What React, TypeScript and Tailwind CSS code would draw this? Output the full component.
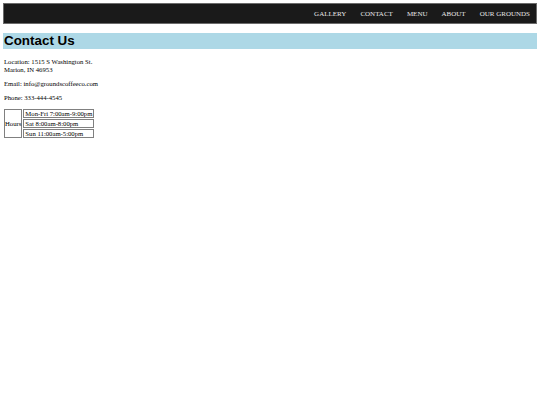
const navItems = ["GALLERY", "CONTACT", "MENU", "ABOUT", "OUR GROUNDS"];

const hours = ["Mon-Fri 7:00am-9:00pm", "Sat 8:00am-8:00pm", "Sun 11:00am-5:00pm"];

export default function App() {
  return (
    <div className="min-h-[405px] bg-white px-[3px] pt-[3px] text-[6.7px] leading-[8px] text-black font-['Liberation_Serif',serif]">
      <nav className="flex h-[21px] items-center justify-end gap-[14px] border border-[#6b6b6b] bg-[#1a1a1a] pr-[6px] text-[7px] text-[#e8e8e8]">
        {navItems.map((item) => (
          <span key={item}>{item}</span>
        ))}
      </nav>
      <h1 className="mt-[9px] h-[16px] bg-[#add8e6] pl-[1px] text-[13.4px] font-bold leading-[16px] font-['Liberation_Sans',sans-serif]">
        Contact Us
      </h1>
      <div className="pl-[1px]">
        <p className="mt-[9px]">
          Location: 1515 S Washington St.
          <br />
          Marion, IN 46953
        </p>
        <p className="mt-[6px]">Email: info@groundscoffeeco.com</p>
        <p className="mt-[6px]">Phone: 333-444-4545</p>
        <table className="mt-[6px] border-separate border-spacing-[1px] -ml-[1px]">
          <tbody>
            {hours.map((h, i) => (
              <tr key={h}>
                {i === 0 && (
                  <td rowSpan={3} className="border border-[#808080] p-0 leading-[7px]">
                    Hours
                  </td>
                )}
                <td className="border border-[#808080] px-[1px] py-0 leading-[7px]">{h}</td>
              </tr>
            ))}
          </tbody>
        </table>
      </div>
    </div>
  );
}
